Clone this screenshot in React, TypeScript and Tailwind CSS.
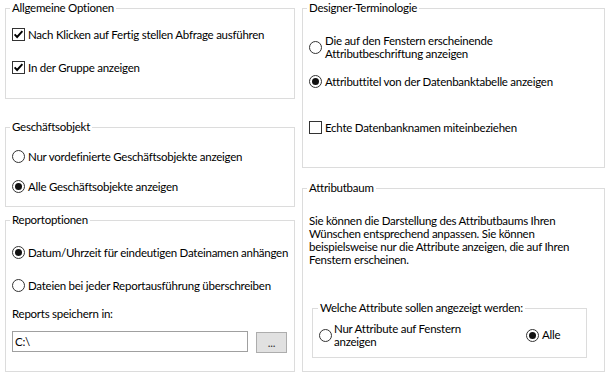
import React from "react";

const Check = ({ checked }: { checked: boolean }) => (
  <span className="w-[13px] h-[13px] shrink-0 border border-[#333333] bg-white flex items-center justify-center">
    {checked && (
      <svg width="11" height="11" viewBox="0 0 11 11">
        <polyline points="1.6,5.4 4.1,8 9.4,2.2" fill="none" stroke="#000" strokeWidth="1.9" />
      </svg>
    )}
  </span>
);

const Radio = ({ checked }: { checked: boolean }) => (
  <span className="w-[13px] h-[13px] shrink-0 rounded-full border border-[#333333] bg-white flex items-center justify-center">
    {checked && <span className="w-[7px] h-[7px] rounded-full bg-[#111111]" />}
  </span>
);

const Legend = ({ children, inner }: { children: React.ReactNode; inner?: boolean }) => (
  <legend className={`${inner ? "ml-[5px]" : "ml-[4px]"} px-[2px] leading-4`}>{children}</legend>
);

export default function App() {
  return (
    <div
      className="w-[607px] h-[375px] bg-white text-black text-[11.5px] tracking-[-0.25px] whitespace-nowrap flex pl-[5px] gap-[7px] overflow-hidden"
      style={{ fontFamily: "Lato, 'Noto Sans', sans-serif" }}
    >
      {/* Left column */}
      <div className="w-[290px] flex flex-col">
        <fieldset className="h-[99px] border border-[#dcdcdc]">
          <Legend>Allgemeine Optionen</Legend>
          <div className="pt-[10px] pl-[6px] flex flex-col gap-[16px]">
            <div className="h-[17px] flex items-center gap-[3px]">
              <Check checked />
              <span>Nach Klicken auf Fertig stellen Abfrage ausführen</span>
            </div>
            <div className="h-[17px] flex items-center gap-[3px]">
              <Check checked />
              <span>In der Gruppe anzeigen</span>
            </div>
          </div>
        </fieldset>

        <fieldset className="mt-[20px] h-[88px] border border-[#dcdcdc]">
          <Legend>Geschäftsobjekt</Legend>
          <div className="pt-[13px] pl-[6px] flex flex-col gap-[13px]">
            <div className="h-[17px] flex items-center gap-[3px]">
              <Radio checked={false} />
              <span>Nur vordefinierte Geschäftsobjekte anzeigen</span>
            </div>
            <div className="h-[17px] flex items-center gap-[3px]">
              <Radio checked />
              <span>Alle Geschäftsobjekte anzeigen</span>
            </div>
          </div>
        </fieldset>

        <fieldset className="mt-[5px] h-[160px] border border-[#dcdcdc]">
          <Legend>Reportoptionen</Legend>
          <div className="pt-[16px] pl-[6px] flex flex-col">
            <div className="h-[17px] flex items-center gap-[3px]">
              <Radio checked />
              <span>Datum/Uhrzeit für eindeutigen Dateinamen anhängen</span>
            </div>
            <div className="mt-[16px] h-[17px] flex items-center gap-[3px]">
              <Radio checked={false} />
              <span>Dateien bei jeder Reportausführung überschreiben</span>
            </div>
            <div className="mt-[11px] h-[17px] flex items-center">
              <span>Reports speichern in:</span>
            </div>
            <div className="mt-[9px] flex items-start">
              <div className="w-[236px] h-[21px] border border-[#a0a0a0] bg-white flex items-center pl-[2px]">
                C:\
              </div>
              <div className="ml-[8px] mt-[1px] w-[31px] h-[21px] border border-[#adadad] bg-[#e1e1e1] flex items-center justify-center text-[#333] leading-none">
                ...
              </div>
            </div>
          </div>
        </fieldset>
      </div>

      {/* Right column */}
      <div className="w-[303px] flex flex-col">
        <fieldset className="h-[168px] border border-[#dcdcdc]">
          <Legend>Designer-Terminologie</Legend>
          <div className="pt-[18px] pl-[6px] flex flex-col">
            <div className="flex items-center gap-[3px]">
              <Radio checked={false} />
              <span className="leading-[13px]">
                Die auf den Fenstern erscheinende
                <br />
                Attributbeschriftung anzeigen
              </span>
            </div>
            <div className="mt-[13px] h-[17px] flex items-center gap-[3px]">
              <Radio checked />
              <span>Attributtitel von der Datenbanktabelle anzeigen</span>
            </div>
            <div className="mt-[29px] h-[17px] flex items-center gap-[3px]">
              <Check checked={false} />
              <span>Echte Datenbanknamen miteinbeziehen</span>
            </div>
          </div>
        </fieldset>

        <fieldset className="mt-[12px] h-[192px] border border-[#dcdcdc]">
          <Legend>Attributbaum</Legend>
          <div className="pt-[18px] pl-[6px] flex flex-col">
            <p className="leading-[13px]">
              Sie können die Darstellung des Attributbaums Ihren
              <br />
              Wünschen entsprechend anpassen. Sie können
              <br />
              beispielsweise nur die Attribute anzeigen, die auf Ihren
              <br />
              Fenstern erscheinen.
            </p>
            <fieldset className="mt-[34px] ml-[3px] w-[275px] h-[58px] border border-[#dcdcdc]">
              <Legend inner>Welche Attribute sollen angezeigt werden:</Legend>
              <div className="pt-[6px] pl-[6px] flex items-center">
                <div className="w-[207px] flex items-center gap-[2px]">
                  <Radio checked={false} />
                  <span className="leading-[13px]">
                    Nur Attribute auf Fenstern
                    <br />
                    anzeigen
                  </span>
                </div>
                <div className="flex items-center gap-[3px]">
                  <Radio checked />
                  <span>Alle</span>
                </div>
              </div>
            </fieldset>
          </div>
        </fieldset>
      </div>
    </div>
  );
}
